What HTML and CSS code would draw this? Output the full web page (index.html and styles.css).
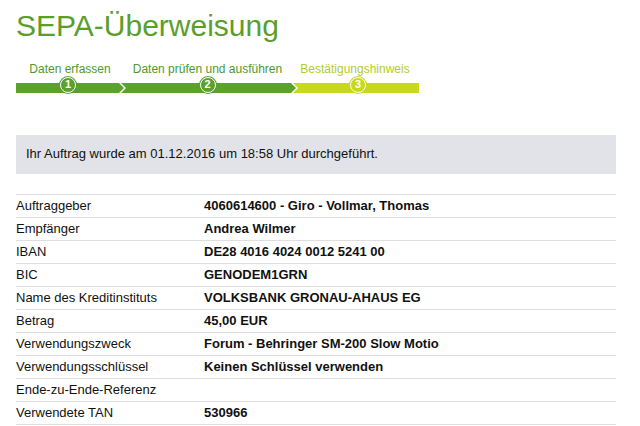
FILE: index.html
```html
<!DOCTYPE html>
<html lang="de">
<head>
<meta charset="utf-8">
<title>SEPA-Überweisung</title>
<link rel="stylesheet" href="styles.css">
</head>
<body>
<div class="page">
  <h1 class="title">SEPA-Überweisung</h1>
  <ol class="steps">
    <li class="step step-first done">
      <span class="step-label">Daten erfassen</span>
      <span class="step-track"><span class="step-bar"></span><span class="step-num">1</span></span>
    </li>
    <li class="step step-mid done">
      <span class="step-label">Daten prüfen und ausführen</span>
      <span class="step-track"><span class="step-bar"></span><span class="step-num">2</span></span>
    </li>
    <li class="step step-last current">
      <span class="step-label">Bestätigungshinweis</span>
      <span class="step-track"><span class="step-bar"></span><span class="step-num">3</span></span>
    </li>
  </ol>
  <div class="notice">Ihr Auftrag wurde am 01.12.2016 um 18:58 Uhr durchgeführt.</div>
  <dl class="details">
    <div class="row"><dt>Auftraggeber</dt><dd>4060614600 - Giro - Vollmar, Thomas</dd></div>
    <div class="row"><dt>Empfänger</dt><dd>Andrea Wilmer</dd></div>
    <div class="row"><dt>IBAN</dt><dd>DE28 4016 4024 0012 5241 00</dd></div>
    <div class="row"><dt>BIC</dt><dd>GENODEM1GRN</dd></div>
    <div class="row"><dt>Name des Kreditinstituts</dt><dd>VOLKSBANK GRONAU-AHAUS EG</dd></div>
    <div class="row"><dt>Betrag</dt><dd>45,00 EUR</dd></div>
    <div class="row"><dt>Verwendungszweck</dt><dd>Forum - Behringer SM-200 Slow Motio</dd></div>
    <div class="row"><dt>Verwendungsschlüssel</dt><dd>Keinen Schlüssel verwenden</dd></div>
    <div class="row"><dt>Ende-zu-Ende-Referenz</dt><dd></dd></div>
    <div class="row"><dt>Verwendete TAN</dt><dd>530966</dd></div>
  </dl>
</div>
</body>
</html>
```

FILE: styles.css
```css
* { box-sizing: border-box; }
html, body { margin: 0; padding: 0; background: #fff; }
body {
  font-family: "Liberation Sans", Arial, sans-serif;
  color: #111;
}
.page {
  padding: 8px 24px 0 16px;
}
.title {
  margin: 0;
  font-size: 30px;
  line-height: 36px;
  font-weight: normal;
  color: #5a9e2c;
}
.steps {
  list-style: none;
  margin: 18px 0 0 0;
  padding: 0;
  display: flex;
}
.step {
  display: flex;
  flex-direction: column;
  align-items: center;
}
.step + .step { margin-left: -5px; }
.step-first { width: 108px; }
.step-mid { width: 177px; }
.step-last { width: 128px; }
.step-label {
  font-size: 12px;
  line-height: 14px;
  white-space: nowrap;
}
.done .step-label { color: #4e9a28; }
.current .step-label { color: #b3cc2c; }
.step-track {
  position: relative;
  align-self: stretch;
  height: 17px;
  margin-top: 1px;
  display: flex;
  justify-content: center;
}
.step-bar {
  position: absolute;
  left: 0; right: 0;
  top: 6px;
  height: 10px;
}
.done .step-bar { background: #5ba22c; }
.current .step-bar { background: #c8d81c; }
.step-first .step-bar {
  clip-path: polygon(0 0, calc(100% - 5px) 0, 100% 50%, calc(100% - 5px) 100%, 0 100%);
}
.step-mid .step-bar {
  clip-path: polygon(2px 0, calc(100% - 5px) 0, 100% 50%, calc(100% - 5px) 100%, 2px 100%, 7px 50%);
}
.step-last .step-bar {
  clip-path: polygon(2px 0, 100% 0, 100% 100%, 2px 100%, 7px 50%);
}
.step-num {
  position: relative;
  width: 16px;
  height: 16px;
  border-radius: 50%;
  border: 1.5px solid #fff;
  color: #fff;
  font-size: 11px;
  font-weight: bold;
  line-height: 13px;
  text-align: center;
}
.done .step-num { background: #5ba22c; box-shadow: 0 0 0 1px #5ba22c; }
.current .step-num { background: #c8d81c; box-shadow: 0 0 0 1px #c8d81c; }
.step-first .step-num { margin-left: -4px; }
.step-last .step-num { margin-left: 6px; }
.notice {
  margin-top: 41px;
  width: 600px;
  background: #e1e3e8;
  padding: 11px 10px 12px 10px;
  font-size: 13px;
  line-height: 16px;
  color: #111;
}
.details {
  margin: 20px 0 0 0;
  width: 600px;
  border-top: 1px solid #dedede;
}
.row {
  display: grid;
  grid-template-columns: 188px 1fr;
  height: 23px;
  align-items: center;
  border-bottom: 1px solid #dedede;
  font-size: 13px;
  line-height: 16px;
}
.row dt { margin: 0; color: #111; }
.row dd { margin: 0; font-weight: bold; color: #111; }
```
